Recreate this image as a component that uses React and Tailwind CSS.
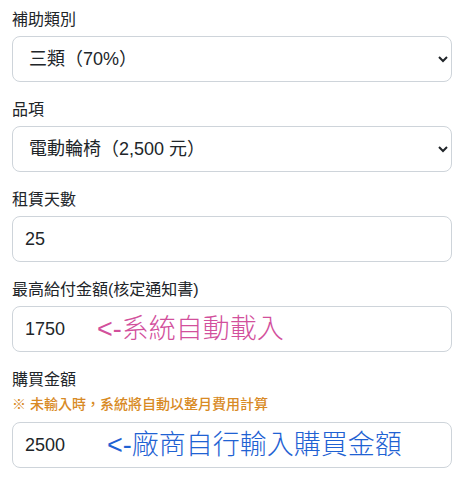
import { useState } from "react";

const font = { fontFamily: '"Liberation Sans", "Noto Sans CJK TC", sans-serif' };

const fieldClass =
  "block w-full h-[46px] rounded-lg border border-[#ced4da] bg-white px-3 text-[18px] text-[#212529] outline-none";

function Field({ label, note, children }) {
  return (
    <div>
      <label className="block mb-1 text-base leading-6 text-[#212529]">{label}</label>
      {note && (
        <p className="-mt-[2px] mb-[8px] text-[14px] leading-5 font-medium text-[#d88a25]">{note}</p>
      )}
      {children}
    </div>
  );
}

export default function App() {
  const [category, setCategory] = useState("3");
  const [item, setItem] = useState("wheelchair");
  const [days, setDays] = useState("25");
  const [maxPay, setMaxPay] = useState("1750");
  const [price, setPrice] = useState("2500");

  return (
    <div className="min-h-screen bg-white px-3 pt-2 space-y-4" style={font}>
      <Field label="補助類別">
        <select className={fieldClass} value={category} onChange={(e) => setCategory(e.target.value)} style={font}>
          <option value="1">一類（100%）</option>
          <option value="2">二類（90%）</option>
          <option value="3">三類（70%）</option>
        </select>
      </Field>

      <Field label="品項">
        <select className={fieldClass} value={item} onChange={(e) => setItem(e.target.value)} style={font}>
          <option value="wheelchair">電動輪椅（2,500 元）</option>
          <option value="bed">電動床（1,500 元）</option>
        </select>
      </Field>

      <Field label="租賃天數">
        <input className={fieldClass} value={days} onChange={(e) => setDays(e.target.value)} style={font} />
      </Field>

      <Field label="最高給付金額(核定通知書)">
        <div className="relative">
          <input className={fieldClass} value={maxPay} onChange={(e) => setMaxPay(e.target.value)} style={font} />
          <span className="pointer-events-none absolute left-[85px] top-1/2 -translate-y-1/2 text-[27px] font-light text-[#d2509c]">
            &lt;-系統自動載入
          </span>
        </div>
      </Field>

      <Field label="購買金額" note="※ 未輸入時，系統將自動以整月費用計算">
        <div className="relative">
          <input className={fieldClass} value={price} onChange={(e) => setPrice(e.target.value)} style={font} />
          <span className="pointer-events-none absolute left-[95px] top-1/2 -translate-y-1/2 text-[27px] font-light text-[#1f62d3]">
            &lt;-廠商自行輸入購買金額
          </span>
        </div>
      </Field>
    </div>
  );
}
